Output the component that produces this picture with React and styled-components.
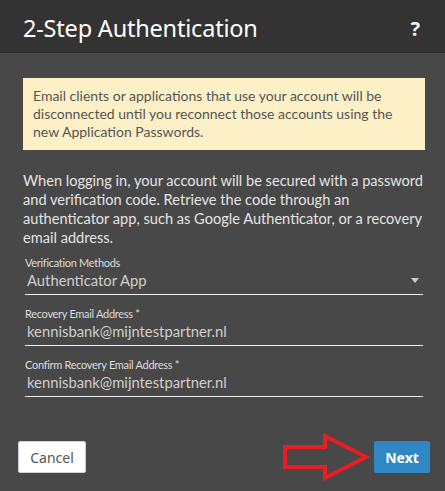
import React from "react";
import styled, { createGlobalStyle } from "styled-components";

const Global = createGlobalStyle`
  html, body { margin: 0; padding: 0; background: #484848; }
  body { font-family: Lato, "Noto Sans", sans-serif; }
  * { box-sizing: border-box; }
`;

const Dialog = styled.div`
  width: 445px;
  height: 491px;
  display: flex;
  flex-direction: column;
  background: #484848;
  overflow: hidden;
`;

const Header = styled.div`
  height: 53px;
  flex: none;
  background: #333333;
  border-bottom: 1px solid #2b2b2b;
  display: flex;
  align-items: center;
  justify-content: space-between;
  padding: 4px 25px 0 23px;
`;

const Title = styled.h1`
  margin: 0;
  font-family: "Noto Sans", "Open Sans", sans-serif;
  font-size: 23.5px;
  font-weight: 400;
  color: #ffffff;
  letter-spacing: -0.2px;
`;

const Help = styled.span`
  font-family: "Noto Sans", sans-serif;
  font-size: 20px;
  font-weight: 700;
  color: #f2f2f2;
`;

const Body = styled.div`
  flex: 1;
  display: flex;
  flex-direction: column;
  padding: 25px 20px 0 23px;
`;

const Notice = styled.div`
  background: #fdf0c7;
  color: #555555;
  font-size: 14px;
  line-height: 18px;
  padding: 9px 10px 9px 10px;
`;

const Description = styled.p`
  margin: 21px 0 0;
  color: #e4e4e4;
  font-size: 14.6px;
  line-height: 19px;
`;

const Field = styled.div`
  position: relative;
  margin: ${(p) => p.$mt || 0}px 2px 0 2px;
  border-bottom: 1px solid #f0f0f0;
  padding-bottom: 4px;
`;

const Label = styled.div`
  color: #dddddd;
  font-size: 11px;
  line-height: 14px;
  letter-spacing: -0.3px;
`;

const Value = styled.div`
  color: #cfcfcf;
  font-size: 14.8px;
  line-height: 20px;
  padding-left: 2px;
`;

const Caret = styled.span`
  position: absolute;
  right: 4px;
  bottom: 11px;
  width: 0;
  height: 0;
  border-left: 4px solid transparent;
  border-right: 4px solid transparent;
  border-top: 5px solid #cccccc;
`;

const Footer = styled.div`
  margin-top: auto;
  display: flex;
  align-items: center;
  justify-content: space-between;
  padding: 0 15px 9px 18px;
`;

const Button = styled.button`
  height: 32px;
  border-radius: 2px;
  font-family: "Noto Sans", sans-serif;
  font-size: 14px;
  cursor: pointer;
  padding: 0;
  width: ${(p) => p.$w}px;
  background: ${(p) => (p.$primary ? "#2f87c3" : "#ffffff")};
  color: ${(p) => (p.$primary ? "#ffffff" : "#555555")};
  font-weight: ${(p) => (p.$primary ? 700 : 400)};
  border: 1px solid ${(p) => (p.$primary ? "#2f87c3" : "#d0d0d0")};
`;

const RightGroup = styled.div`
  display: flex;
  align-items: center;
  gap: 3px;
`;

const Arrow = () => (
  <svg width="90" height="50" viewBox="0 0 90 50" aria-hidden="true">
    <polygon
      points="4,15 44,15 44,4 85,25 44,46 44,35 4,35"
      fill="none"
      stroke="#ea1c24"
      strokeWidth="4"
      strokeLinejoin="miter"
      strokeMiterlimit="4"
    />
  </svg>
);

export default function App() {
  return (
    <>
      <Global />
      <Dialog>
        <Header>
          <Title>2-Step Authentication</Title>
          <Help>?</Help>
        </Header>
        <Body>
          <Notice>
            Email clients or applications that use your account will be
            disconnected until you reconnect those accounts using the new
            Application Passwords.
          </Notice>
          <Description>
            When logging in, your account will be secured with a password and
            verification code. Retrieve the code through an authenticator app,
            such as Google Authenticator, or a recovery email address.
          </Description>
          <Field $mt={9}>
            <Label>Verification Methods</Label>
            <Value>Authenticator App</Value>
            <Caret />
          </Field>
          <Field $mt={12}>
            <Label>Recovery Email Address *</Label>
            <Value>kennisbank@mijntestpartner.nl</Value>
          </Field>
          <Field $mt={12}>
            <Label>Confirm Recovery Email Address *</Label>
            <Value>kennisbank@mijntestpartner.nl</Value>
          </Field>
        </Body>
        <Footer>
          <Button $w={68}>Cancel</Button>
          <RightGroup>
            <Arrow />
            <Button $primary $w={56}>Next</Button>
          </RightGroup>
        </Footer>
      </Dialog>
    </>
  );
}
